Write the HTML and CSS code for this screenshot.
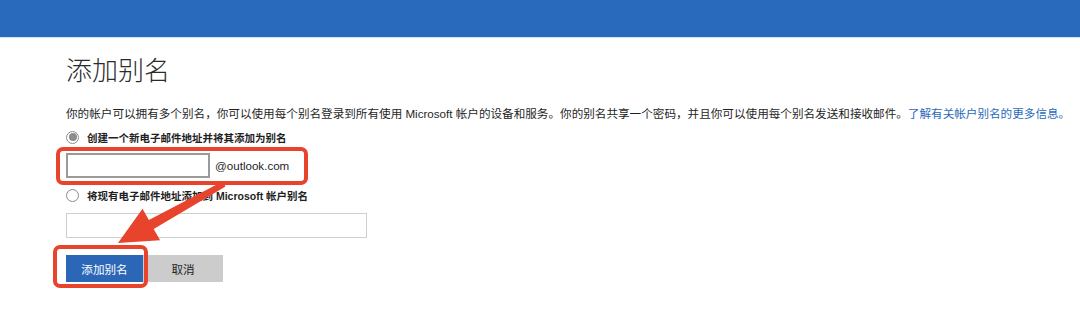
FILE: index.html
```html
<!DOCTYPE html>
<html lang="zh-CN">
<head>
    <meta charset="UTF-8">
    <title>添加别名</title>
    <link rel="stylesheet" href="styles.css">
</head>
<body>
    <header class="topbar"></header>
    <main class="content">
        <h1 class="title">添加别名</h1>
        <p class="intro">你的帐户可以拥有多个别名，你可以使用每个别名登录到所有使用 Microsoft 帐户的设备和服务。你的别名共享一个密码，并且你可以使用每个别名发送和接收邮件。<a href="#">了解有关帐户别名的更多信息。</a></p>

        <div class="radio-row">
            <span class="radio checked"></span>
            <span class="radio-label">创建一个新电子邮件地址并将其添加为别名</span>
        </div>
        <div class="new-alias">
            <input type="text" class="alias-input">
            <span class="domain">@outlook.com</span>
        </div>

        <div class="radio-row second">
            <span class="radio"></span>
            <span class="radio-label">将现有电子邮件地址添加到 Microsoft 帐户别名</span>
        </div>
        <input type="text" class="existing-input">

        <div class="actions">
            <button class="btn primary">添加别名</button>
            <button class="btn secondary">取消</button>
        </div>
    </main>

    <!-- annotations -->
    <svg class="marks" width="1080" height="322" viewBox="0 0 1080 322">
        <rect x="58" y="149" width="248" height="34" rx="5" fill="none" stroke="#e8432c" stroke-width="4"/>
        <rect x="55" y="247" width="91" height="39" rx="5" fill="none" stroke="#e8432c" stroke-width="4"/>
        <polygon points="222.5,181.4 148.9,220.1 142.5,208.7 118,243 160.1,240.3 153.7,228.9 225.5,186.6" fill="#e8432c"/>
    </svg>
</body>
</html>
```

FILE: styles.css
```css
body {
    margin: 0;
    background-color: #fff;
    color: #1f1f1f;
    font-family: "Liberation Sans", "Noto Sans CJK SC", sans-serif;
    position: relative;
    height: 322px;
    overflow: hidden;
}
.topbar {
    height: 37px;
    background-color: #2a6abd;
    border-bottom: 1px solid #d6e3f3;
}
.content {
    padding-left: 66px;
}
.title {
    margin: 15px 0 0 0;
    font-size: 26px;
    line-height: 36px;
    font-weight: 300;
    color: #2b2b2b;
}
.intro {
    margin: 17px 0 0 0;
    font-size: 11.6px;
    line-height: 16px;
    white-space: nowrap;
}
.intro a {
    color: #2a6abd;
    text-decoration: none;
}
.radio-row {
    display: flex;
    align-items: center;
    margin-top: 7px;
    height: 16px;
}
.radio-row.second {
    margin-top: 9px;
}
.radio {
    width: 11px;
    height: 11px;
    border: 1px solid #8a8a8a;
    border-radius: 50%;
    box-sizing: content-box;
    display: flex;
    justify-content: center;
    align-items: center;
    background-color: #fff;
}
.radio.checked::after {
    content: "";
    width: 8px;
    height: 8px;
    border-radius: 50%;
    background-color: #8c8c8c;
}
.radio-label {
    margin-left: 8px;
    font-size: 10.5px;
    font-weight: 700;
    color: #1f1f1f;
}
.new-alias {
    display: flex;
    align-items: center;
    margin-top: 8px;
}
.alias-input {
    width: 144px;
    height: 25px;
    box-sizing: border-box;
    border: 2px solid #9a9a9a;
    margin: 0;
    padding: 0 4px;
}
.domain {
    margin-left: 5px;
    font-size: 11.6px;
    color: #1f1f1f;
}
.existing-input {
    display: block;
    width: 301px;
    height: 25px;
    box-sizing: border-box;
    border: 1px solid #cfcfcf;
    margin: 10px 0 0 0;
    padding: 0 4px;
}
.actions {
    display: flex;
    margin-top: 17px;
}
.btn {
    height: 27px;
    border: none;
    margin: 0;
    font-family: "Liberation Sans", "Noto Sans CJK SC", sans-serif;
    font-size: 11.6px;
    cursor: pointer;
}
.btn.primary {
    width: 77px;
    background-color: #2b67b6;
    color: #fff;
}
.btn.secondary {
    width: 80px;
    background-color: #cccccc;
    color: #1f1f1f;
}
.marks {
    position: absolute;
    top: 0;
    left: 0;
    pointer-events: none;
}
```
